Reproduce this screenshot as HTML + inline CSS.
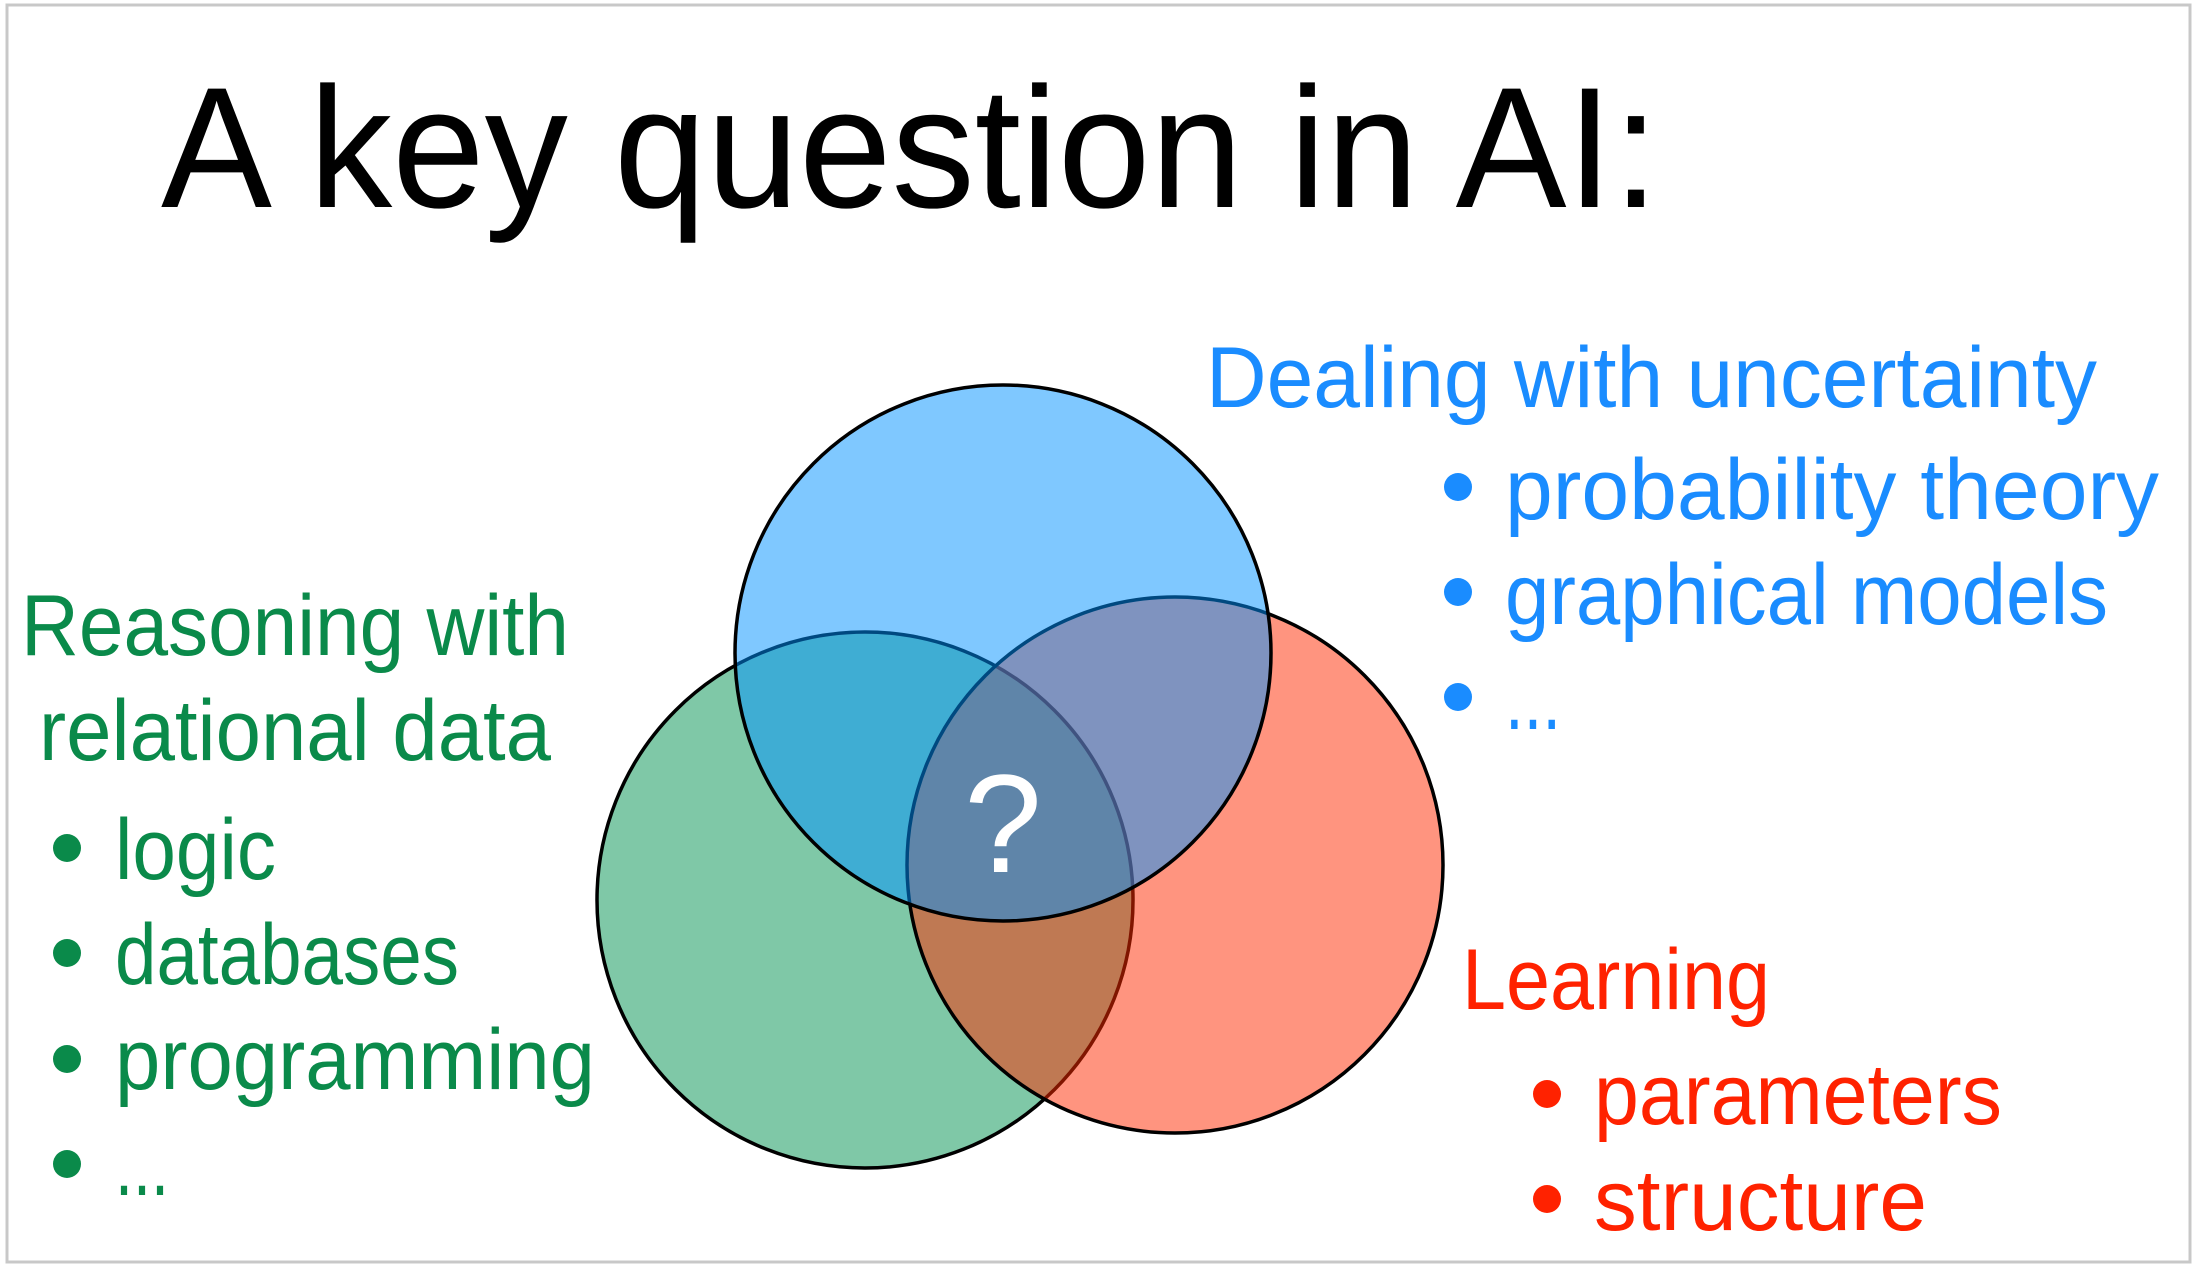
<!DOCTYPE html>
<html><head><meta charset="utf-8"><style>
html,body{margin:0;padding:0;background:#fff;}
svg{display:block;}
text{font-family:"Liberation Sans",sans-serif;}
</style></head><body>
<svg width="2199" height="1269" viewBox="0 0 2199 1269" xmlns="http://www.w3.org/2000/svg">
<rect x="0" y="0" width="2199" height="1269" fill="#fff"/>
<rect x="7" y="5" width="2183" height="1257" fill="#fff" stroke="#c8c8c8" stroke-width="3"/>
<text x="161" y="207" font-size="172" fill="#000" textLength="1498" lengthAdjust="spacingAndGlyphs">A key question in AI:</text>

<g stroke="#000" stroke-width="3.5">
<circle cx="865" cy="900" r="268" fill="#009150" fill-opacity="0.5"/>
<circle cx="1175" cy="865" r="268" fill="#ff2900" fill-opacity="0.5"/>
<circle cx="1003" cy="653" r="268" fill="#0091ff" fill-opacity="0.5"/>
</g>
<text x="1003" y="872" font-size="140" fill="#fff" text-anchor="middle" font-family="Liberation Serif, serif">?</text>

<g fill="#1a8cff">
<text x="1206" y="407" font-size="86" textLength="891" lengthAdjust="spacingAndGlyphs">Dealing with uncertainty</text>
<text x="1505" y="519" font-size="86" textLength="654" lengthAdjust="spacingAndGlyphs">probability theory</text>
<text x="1505" y="624" font-size="86" textLength="603" lengthAdjust="spacingAndGlyphs">graphical models</text>
<text x="1505" y="729" font-size="86" textLength="56" lengthAdjust="spacingAndGlyphs">...</text>
<circle cx="1458" cy="487" r="14"/><circle cx="1458" cy="592" r="14"/><circle cx="1458" cy="697" r="14"/>
</g>

<g fill="#0a8a4a">
<text x="21" y="655" font-size="86" textLength="548" lengthAdjust="spacingAndGlyphs">Reasoning with</text>
<text x="39" y="760" font-size="86" textLength="512" lengthAdjust="spacingAndGlyphs">relational data</text>
<text x="115" y="879" font-size="86" textLength="161" lengthAdjust="spacingAndGlyphs">logic</text>
<text x="115" y="984" font-size="86" textLength="344" lengthAdjust="spacingAndGlyphs">databases</text>
<text x="115" y="1089" font-size="86" textLength="480" lengthAdjust="spacingAndGlyphs">programming</text>
<text x="115" y="1195" font-size="86" textLength="54" lengthAdjust="spacingAndGlyphs">...</text>
<circle cx="67" cy="848" r="14"/><circle cx="67" cy="953" r="14"/><circle cx="67" cy="1059" r="14"/><circle cx="67" cy="1164" r="14"/>
</g>

<g fill="#ff2200">
<text x="1462" y="1009" font-size="86" textLength="308" lengthAdjust="spacingAndGlyphs">Learning</text>
<text x="1594" y="1124" font-size="86" textLength="408" lengthAdjust="spacingAndGlyphs">parameters</text>
<text x="1594" y="1230" font-size="86" textLength="333" lengthAdjust="spacingAndGlyphs">structure</text>
<circle cx="1547" cy="1094" r="14"/><circle cx="1547" cy="1199" r="14"/>
</g>
</svg>
</body></html>
